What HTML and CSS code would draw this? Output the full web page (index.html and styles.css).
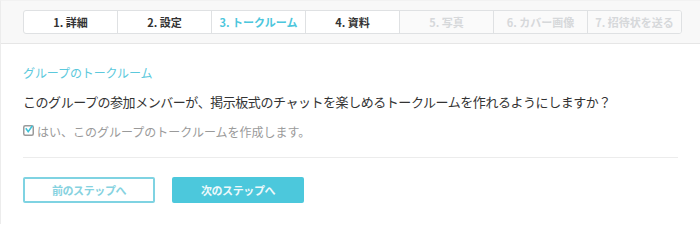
FILE: index.html
```html
<!DOCTYPE html>
<html lang="ja">
<head>
<meta charset="utf-8">
<link rel="stylesheet" href="styles.css">
</head>
<body>
<div class="page">
  <div class="steps-bar">
    <div class="steps">
      <div class="step">1. 詳細</div>
      <div class="step">2. 設定</div>
      <div class="step active">3. トークルーム</div>
      <div class="step">4. 資料</div>
      <div class="step disabled">5. 写真</div>
      <div class="step disabled">6. カバー画像</div>
      <div class="step disabled">7. 招待状を送る</div>
    </div>
  </div>
  <div class="content">
    <h2 class="title">グループのトークルーム</h2>
    <p class="question">このグループの参加メンバーが、掲示板式のチャットを楽しめるトークルームを作れるようにしますか？</p>
    <label class="check">
      <svg class="box" width="11" height="11" viewBox="0 0 11 11">
        <rect x="0.75" y="0.75" width="9.5" height="9.5" rx="1.5" fill="none" stroke="#9a9a9a" stroke-width="1.5"/>
        <path d="M2.8 3.2 L5.2 6.6 L9.4 0.8" fill="none" stroke="#3fc3d8" stroke-width="1.6"/>
      </svg>
      <span>はい、このグループのトークルームを作成します。</span>
    </label>
    <hr class="divider">
    <div class="actions">
      <button class="btn btn-outline">前のステップへ</button>
      <button class="btn btn-primary">次のステップへ</button>
    </div>
  </div>
</div>
</body>
</html>
```
FILE: styles.css
```css
html, body {
  margin: 0;
  padding: 0;
  background: #ffffff;
}
body {
  font-family: "Noto Sans CJK JP", "Noto Sans", sans-serif;
  width: 700px;
  height: 224px;
  overflow: hidden;
}
.page {
  border-left: 1px solid #ececec;
  border-top: 1px solid #f2f2f2;
  height: 223px;
}
.steps-bar {
  background: #f8f8f8;
  border-bottom: 1px solid #e6e6e6;
  padding: 9px 0 9px 22px;
}
.steps {
  display: flex;
  width: 657px;
  height: 22px;
  border: 1px solid #dfe1e3;
  border-radius: 3px;
  background: #fff;
  overflow: hidden;
}
.step {
  flex: 1;
  display: flex;
  align-items: center;
  justify-content: center;
  font-size: 11px;
  font-weight: bold;
  color: #333;
  border-left: 1px solid #dfe1e3;
}
.step:first-child { border-left: none; }
.step.active { color: #4cc6dc; }
.step.disabled { color: #d6d8da; background: #fafafa; }
.content {
  padding: 0 22px;
}
.title {
  margin: 19px 0 0;
  font-size: 12px;
  letter-spacing: -0.1px;
  font-weight: normal;
  color: #5cc9dc;
  line-height: 20px;
}
.question {
  margin: 9px 0 0;
  font-size: 13px;
  letter-spacing: -0.45px;
  color: #333;
  line-height: 20px;
}
.check {
  display: flex;
  align-items: center;
  gap: 3px;
  margin-top: 10px;
  font-size: 12px;
  letter-spacing: 0;
  color: #9a9a9a;
  line-height: 20px;
}
.box { margin-top: -4px; }
.divider {
  margin: 15px 0 0;
  border: none;
  border-top: 1px solid #ececec;
  width: 655px;
}
.actions {
  display: flex;
  gap: 17px;
  margin-top: 19px;
}
.btn {
  width: 132px;
  height: 26px;
  border-radius: 2px;
  font-family: inherit;
  font-size: 11px;
  letter-spacing: -0.4px;
  font-weight: bold;
  padding: 0;
  cursor: pointer;
}
.btn-outline {
  background: #fff;
  border: 2px solid #7fd3e2;
  color: #86d2e0;
}
.btn-primary {
  background: #4cc8dc;
  border: 2px solid #4cc8dc;
  color: #eef9fb;
}
```
